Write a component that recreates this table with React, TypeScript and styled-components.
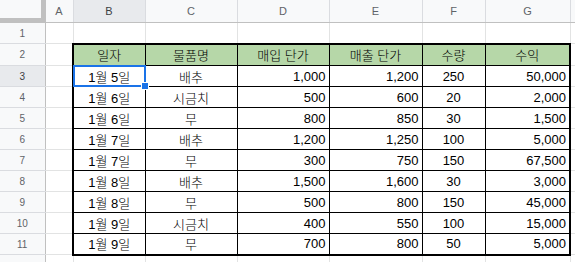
import React from 'react';
import styled, { createGlobalStyle, css } from 'styled-components';

const GlobalStyle = createGlobalStyle`
  html, body {
    margin: 0;
    padding: 0;
    background: #ffffff;
    overflow: hidden;
  }
  body {
    font-family: "Liberation Sans", Arial, "Noto Sans CJK KR", sans-serif;
  }
`;

const COLUMNS = [
  { key: 'A', width: 28 },
  { key: 'B', width: 72 },
  { key: 'C', width: 92 },
  { key: 'D', width: 92 },
  { key: 'E', width: 93 },
  { key: 'F', width: 63 },
  { key: 'G', width: 85 },
  { key: '', width: 80 },
];

type Align = 'left' | 'center' | 'right';

const HEADERS = ['일자', '물품명', '매입 단가', '매출 단가', '수량', '수익'];
const ALIGNS: Align[] = ['center', 'center', 'right', 'right', 'center', 'right'];

const ROWS = [
  ['1월 5일', '배추', '1,000', '1,200', '250', '50,000'],
  ['1월 6일', '시금치', '500', '600', '20', '2,000'],
  ['1월 6일', '무', '800', '850', '30', '1,500'],
  ['1월 7일', '배추', '1,200', '1,250', '100', '5,000'],
  ['1월 7일', '무', '300', '750', '150', '67,500'],
  ['1월 8일', '배추', '1,500', '1,600', '30', '3,000'],
  ['1월 8일', '무', '500', '800', '150', '45,000'],
  ['1월 9일', '시금치', '400', '550', '100', '15,000'],
  ['1월 9일', '무', '700', '800', '50', '5,000'],
];

const Sheet = styled.table`
  border-collapse: collapse;
  table-layout: fixed;
  width: 650px;
  font-family: "Liberation Sans", Arial, "Noto Sans CJK KR", sans-serif;
`;

const Corner = styled.th`
  width: 45px;
  height: 22px;
  padding: 0;
  background: #f8f9fa;
  box-shadow: inset -4px -4px 0 #c0c0c0;
  border-right: 1px solid #c0c0c0;
  border-bottom: 1px solid #c0c0c0;
`;

const ColHead = styled.th<{ $active?: boolean }>`
  height: 22px;
  padding: 0;
  background: ${p => (p.$active ? '#e8eaed' : '#f8f9fa')};
  color: ${p => (p.$active ? '#3c4043' : '#5f6368')};
  font-size: 11px;
  font-weight: normal;
  text-align: center;
  border-right: 1px solid #dadce0;
  border-bottom: 1px solid #c0c0c0;
`;

const RowHead = styled.th<{ $active?: boolean }>`
  padding: 0;
  background: ${p => (p.$active ? '#e8eaed' : '#f8f9fa')};
  color: ${p => (p.$active ? '#3c4043' : '#5f6368')};
  font-size: 10px;
  font-weight: normal;
  text-align: center;
  border-right: 1px solid #c0c0c0;
  border-bottom: 1px solid #dadce0;
`;

const Row = styled.tr<{ $height: number }>`
  height: ${p => p.$height}px;
`;

const Cell = styled.td<{ $align?: Align; $data?: boolean; $head?: boolean }>`
  position: relative;
  padding: 0 3px;
  font-size: 13px;
  font-weight: 300;
  color: #000000;
  white-space: nowrap;
  overflow: visible;
  text-align: ${p => p.$align ?? 'left'};
  border: 1px solid #e2e3e3;
  ${p =>
    p.$data &&
    css`
      border: 1px solid #000000;
    `}
  ${p =>
    p.$head &&
    css`
      background: #b6d7a8;
    `}
`;

const Selection = styled.div`
  position: absolute;
  left: -1px;
  top: -1px;
  right: -1px;
  bottom: -1px;
  border: 2px solid #1a73e8;
  pointer-events: none;
`;

const Handle = styled.div`
  position: absolute;
  right: -5px;
  bottom: -5px;
  width: 6px;
  height: 6px;
  background: #1a73e8;
  border: 1px solid #ffffff;
`;

const edge = (row: number, col: number, lastRow: number) => {
  const s: React.CSSProperties = {};
  if (col === 0) s.borderLeft = '2px solid #000';
  if (col === HEADERS.length - 1) s.borderRight = '2px solid #000';
  if (row === 0) s.borderTop = '2px solid #000';
  if (row === lastRow) s.borderBottom = '2px solid #000';
  return s;
};

const DataRow: React.FC<{ num: number; values: string[]; index: number; lastRow: number; head?: boolean }> = ({
  num,
  values,
  index,
  lastRow,
  head,
}) => (
  <Row $height={index === 0 ? 22 : 21}>
    <RowHead $active={num === 3}>{num}</RowHead>
    <Cell />
    {values.map((v, c) => (
      <Cell
        key={c}
        $data
        $head={head}
        $align={head ? 'center' : ALIGNS[c]}
        style={edge(index, c, lastRow)}
      >
        {v}
        {num === 3 && c === 0 && (
          <Selection>
            <Handle />
          </Selection>
        )}
      </Cell>
    ))}
    <Cell />
  </Row>
);

const EmptyRow: React.FC<{ num?: number }> = ({ num }) => (
  <Row $height={21}>
    <RowHead>{num}</RowHead>
    {COLUMNS.map((c, i) => (
      <Cell key={i} />
    ))}
  </Row>
);

export default function App() {
  const lastRow = ROWS.length;
  return (
    <>
      <GlobalStyle />
      <Sheet>
        <colgroup>
          <col style={{ width: 45 }} />
          {COLUMNS.map((c, i) => (
            <col key={i} style={{ width: c.width }} />
          ))}
        </colgroup>
        <thead>
          <tr>
            <Corner />
            {COLUMNS.map((c, i) => (
              <ColHead key={i} $active={c.key === 'B'}>
                {c.key}
              </ColHead>
            ))}
          </tr>
        </thead>
        <tbody>
          <EmptyRow num={1} />
          <DataRow num={2} values={HEADERS} index={0} lastRow={lastRow} head />
          {ROWS.map((r, i) => (
            <DataRow key={i} num={i + 3} values={r} index={i + 1} lastRow={lastRow} />
          ))}
          <EmptyRow />
        </tbody>
      </Sheet>
    </>
  );
}
